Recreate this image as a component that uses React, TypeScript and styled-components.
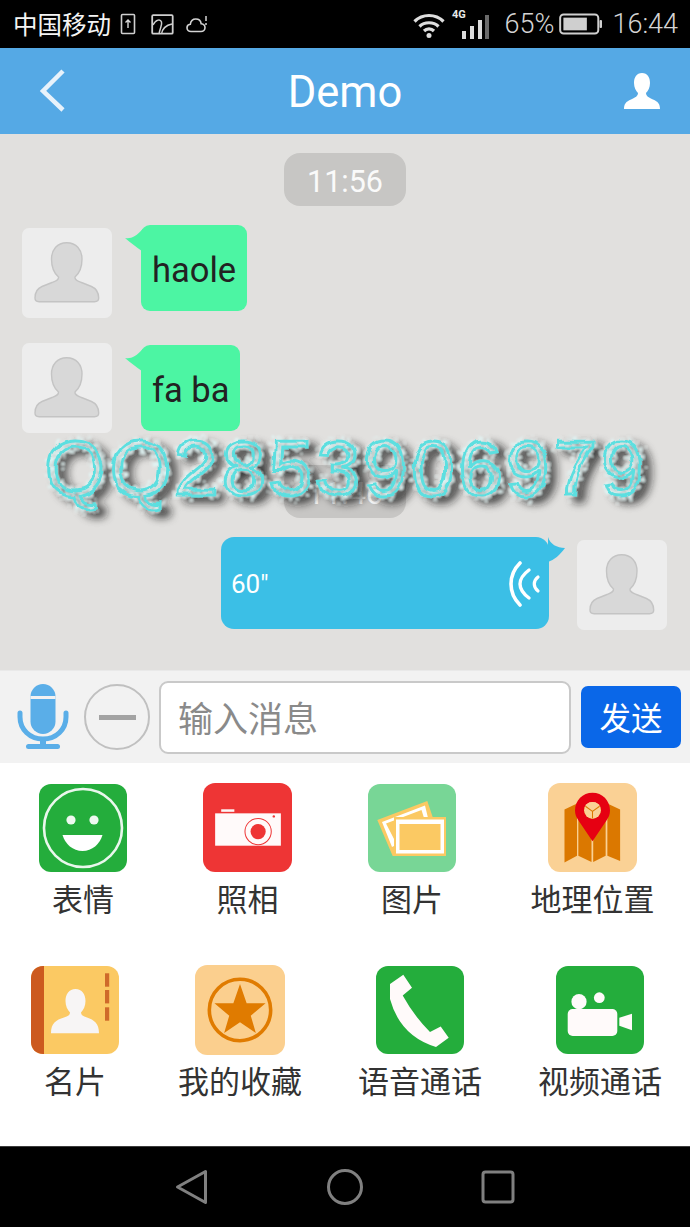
import React from "react";
import styled, { createGlobalStyle } from "styled-components";

const Global = createGlobalStyle`
  html, body { margin: 0; padding: 0; background: #000; }
  * { box-sizing: border-box; }
`;

const Screen = styled.div`
  position: relative;
  width: 690px;
  height: 1227px;
  display: flex;
  flex-direction: column;
  overflow: hidden;
  font-family: Roboto, "Noto Sans CJK SC", sans-serif;
`;

const StatusBar = styled.div`
  height: 48px;
  background: #000;
  display: flex;
  align-items: center;
  justify-content: space-between;
  padding: 0 12px 0 13px;
`;
const StatusGroup = styled.div`
  display: flex;
  align-items: center;
`;
const Carrier = styled.span`
  font: 400 24.5px/48px "Noto Sans CJK SC", sans-serif;
  color: #f4f4f4;
  margin-right: 9px;
`;
const StatusText = styled.span`
  font: 300 27px/50px Roboto, sans-serif;
  color: #d4d4d4;
`;
const StatusSvg = styled.svg<{ $ml?: number; $mr?: number }>`
  display: block;
  flex: none;
  margin-left: ${(p) => p.$ml ?? 0}px;
  margin-right: ${(p) => p.$mr ?? 0}px;
`;

const Header = styled.div`
  height: 86px;
  background: #55a9e5;
  display: flex;
  align-items: center;
  justify-content: space-between;
  padding: 0 29px 0 38px;
  position: relative;
`;
const Title = styled.div`
  position: absolute;
  left: 0;
  right: 0;
  top: 0;
  text-align: center;
  font: 400 43.5px/90px Roboto, sans-serif;
  color: #fff;
`;

const Chat = styled.div`
  height: 536px;
  background: #e1e0de;
  padding-top: 19px;
  display: flex;
  flex-direction: column;
`;
const TimePill = styled.div<{ $mt?: number; $mb: number }>`
  width: 122px;
  height: 53px;
  align-self: center;
  flex: none;
  border-radius: 16px;
  background: #c7c6c4;
  color: #fafafa;
  font: 400 30.5px/57px Roboto, sans-serif;
  text-align: center;
  margin-top: ${(p) => p.$mt ?? 0}px;
  margin-bottom: ${(p) => p.$mb}px;
`;
const Row = styled.div<{ $mine?: boolean; $mb?: number }>`
  display: flex;
  align-items: flex-start;
  justify-content: ${(p) => (p.$mine ? "flex-end" : "flex-start")};
  padding: ${(p) => (p.$mine ? "0 23px 0 0" : "0 0 0 22px")};
  gap: ${(p) => (p.$mine ? 28 : 29)}px;
  margin-bottom: ${(p) => p.$mb ?? 0}px;
`;
const Avatar = styled.div<{ $mt: number }>`
  width: 90px;
  height: 90px;
  flex: none;
  background: #ededed;
  border-radius: 7px;
  margin-top: ${(p) => p.$mt}px;
`;
const GreenBubble = styled.div<{ $mt?: number }>`
  position: relative;
  height: 86px;
  padding: 0 11px;
  background: #4cf5a3;
  border-radius: 9px;
  color: #222;
  font: 400 34.5px/90px Roboto, sans-serif;
  margin-top: ${(p) => p.$mt ?? 0}px;
`;
const BlueBubble = styled.div`
  position: relative;
  width: 328px;
  height: 92px;
  background: #3bbfe6;
  border-radius: 13px;
  display: flex;
  align-items: center;
  justify-content: space-between;
  padding: 2px 7px 0 10px;
  color: #fff;
  font: 400 26px/1 Roboto, sans-serif;
`;
const Tail = styled.svg<{ $side: "left" | "right" }>`
  position: absolute;
  top: 0;
  ${(p) => (p.$side === "left" ? "left: -16px;" : "right: -17px;")}
`;

const InputBar = styled.div`
  height: 93px;
  background: #f2f2f2;
  border-top: 1px solid #e9e9e9;
  display: flex;
  align-items: center;
  padding: 0 9px 0 17px;
`;
const Minus = styled.div`
  width: 66px;
  height: 66px;
  margin-left: 15px;
  flex: none;
  border-radius: 50%;
  border: 2px solid #c0c0c0;
  display: flex;
  align-items: center;
  justify-content: center;
  &::before {
    content: "";
    width: 37px;
    height: 5px;
    background: #a3a3a3;
  }
`;
const Field = styled.div`
  width: 412px;
  height: 73px;
  margin-left: 9px;
  flex: none;
  background: #fff;
  border: 2px solid #c9c9c9;
  border-radius: 9px;
  padding-left: 17px;
  color: #8a8a8a;
  font: 400 35px/67px "Noto Sans CJK SC", sans-serif;
`;
const Send = styled.div`
  width: 100px;
  height: 62px;
  margin-left: 10px;
  flex: none;
  background: #0a67e8;
  border-radius: 7px;
  color: #fff;
  text-align: center;
  font: 400 31.5px/60px "Noto Sans CJK SC", sans-serif;
`;

const Panel = styled.div`
  height: 383px;
  background: #fff;
  padding-top: 20px;
`;
const PanelRow = styled.div<{ $cols: string }>`
  display: grid;
  grid-template-columns: ${(p) => p.$cols};
  height: 182px;
`;
const Item = styled.div`
  display: flex;
  flex-direction: column;
  align-items: center;
`;
const Slot = styled.div`
  height: 90px;
  display: flex;
  align-items: flex-start;
`;
const TileSvg = styled.svg<{ $mt?: number }>`
  display: block;
  margin-top: ${(p) => p.$mt ?? 0}px;
`;
const Label = styled.div`
  font: 400 31px/50px "Noto Sans CJK SC", sans-serif;
  color: #333;
  white-space: nowrap;
`;

const NavBar = styled.div`
  height: 81px;
  background: #000;
  border-top: 1px solid #3c3c3c;
  display: flex;
  align-items: center;
  justify-content: center;
  gap: 118px;
  padding: 0 1px 1px 0;
`;

const Watermark = styled.div`
  position: absolute;
  left: 45px;
  top: 423px;
  font: 400 78px/90px "Liberation Sans", sans-serif;
  letter-spacing: 4px;
  white-space: nowrap;
  color: rgba(120, 235, 235, 0.05);
  -webkit-text-stroke: 3px #5cdfe0;
  filter: url(#fuzz);
  pointer-events: none;
`;
const Defs = styled.svg`
  position: absolute;
  width: 0;
  height: 0;
`;

const PersonPath =
  "M44.7 14.7C35 14.7 29.5 22 29.5 31C29.5 40 33 46 36.5 49C37 52 34 53 30 54.5L20 58.5C15 60.5 13 65 13 70C13 72.5 14.5 73.7 17 73.7H72.5C75 73.7 76.7 72.5 76.7 70C76.7 65 74 60.5 69.5 58.5L59.5 54.5C55.5 53 52.5 52 53 49C56.5 46 60 40 60 31C60 22 54.5 14.7 44.7 14.7Z";

const Person = ({ mt }: { mt: number }) => (
  <Avatar $mt={mt}>
    <svg width="90" height="90" viewBox="0 0 90 90">
      <path d={PersonPath} fill="#d8d8d8" stroke="#c4c4c4" strokeWidth="1.4" />
    </svg>
  </Avatar>
);

const GreenTail = () => (
  <Tail $side="left" width="18" height="30" viewBox="0 0 18 30">
    <path d="M0 13C6 14 12 12 20 1V28C12 23 6 18 0 13Z" fill="#4cf5a3" />
  </Tail>
);

const Tile = ({ size = 88, mt, bg, children }: { size?: number; mt?: number; bg: string; children: React.ReactNode }) => (
  <TileSvg $mt={mt} width={size} height={size} viewBox="0 0 88 88">
    <rect width="88" height="88" rx="12" fill={bg} />
    {children}
  </TileSvg>
);

const items1 = [
  {
    label: "表情",
    icon: (
      <Tile mt={1} bg="#24ad3c">
        <circle cx="44" cy="44" r="39" fill="none" stroke="#e9f7ec" strokeWidth="2.6" />
        <circle cx="32" cy="36" r="4.6" fill="#eef9f0" />
        <circle cx="55" cy="36" r="4.6" fill="#eef9f0" />
        <path d="M23.5 51H63.5C61 60 53 67 43.5 67C34 67 26 60 23.5 51Z" fill="#fff" />
      </Tile>
    ),
  },
  {
    label: "照相",
    icon: (
      <Tile mt={0} size={89} bg="#ee3535">
        <rect x="18" y="26" width="13" height="2.5" fill="#fdf5f5" />
        <rect x="12" y="30" width="65" height="32" fill="#fffafa" />
        <circle cx="54.5" cy="48" r="13" fill="#fffafa" stroke="#ee3535" strokeWidth="1" />
        <circle cx="54.5" cy="48" r="7.5" fill="#ee3535" />
        <circle cx="70" cy="33" r="1.2" fill="#ee3535" />
      </Tile>
    ),
  },
  {
    label: "图片",
    icon: (
      <Tile mt={1} bg="#78d696">
        <path d="M9.3 36L59.3 17L65 34H26V72H24.7Z" fill="#fbc963" />
        <path d="M14 38L57 21.5L60 34H26V62L24 63Z" fill="#fff" />
        <path d="M18 39.5L53.5 26L56 34H26V55Z" fill="#fbc963" />
        <rect x="26" y="33" width="52" height="39" fill="#fbc963" />
        <rect x="28" y="35.5" width="48" height="34" fill="#fff" />
        <rect x="31.5" y="40" width="41" height="26" fill="#fbc963" />
      </Tile>
    ),
  },
  {
    label: "地理位置",
    icon: (
      <Tile mt={0} size={89} bg="#fad195">
        <g fill="#db7800">
          <path d="M16.3 26.3L28.7 20.3V72L16.3 78.5Z" />
          <path d="M30 20.3L43 28.7V78L30 72Z" />
          <path d="M44.7 28.7L57 20.3V72L44.7 78Z" />
          <path d="M58.7 20.3L71.3 26.3V77L58.7 72Z" />
        </g>
        <path
          fillRule="evenodd"
          d="M44 9.7C34.4 9.7 26.7 17.4 26.7 27C26.7 31.5 28 34 30.5 37.5L44 57.7L57.5 37.5C60 34 61.3 31.5 61.3 27C61.3 17.4 53.6 9.7 44 9.7ZM44 18.7A8.3 8.3 0 1 1 44 35.3A8.3 8.3 0 1 1 44 18.7Z"
          fill="#e60012"
        />
        <circle cx="44" cy="27" r="8.3" fill="#fad195" />
        <path d="M37 23L44 28L51 23M44 28V35" stroke="#db7800" strokeWidth="1" fill="none" />
      </Tile>
    ),
  },
];

const items2 = [
  {
    label: "名片",
    icon: (
      <Tile mt={1} bg="#fbc963">
        <path d="M13 0H12C5 0 0 5 0 12V76C0 83 5 88 12 88H13Z" fill="#cc5a1f" />
        <g fill="#cf6a2a">
          <rect x="74" y="7.3" width="4.2" height="13.4" />
          <rect x="74" y="24" width="4.2" height="13.4" />
          <rect x="74" y="41.3" width="4.2" height="13.4" />
        </g>
        <path
          d="M44.5 23C38 23 34.5 28 34.5 35C34.5 40 36.5 44 39 46.5C39 49 37 50 33 51.5C25 54 20 57 20 67.3H68C68 57 63 54 56 51.5C52 50 50 49 50 46.5C52.5 44 54.5 40 54.5 35C54.5 28 51 23 44.5 23Z"
          fill="#f7f5f5"
        />
      </Tile>
    ),
  },
  {
    label: "我的收藏",
    icon: (
      <Tile size={90} bg="#fbcf8e">
        <circle cx="44" cy="44" r="30" fill="none" stroke="#e07b00" strokeWidth="3.5" />
        <path d="M44 18.5L50.5 37.5H69L54.5 49.5L59.5 66.5L44 56L28.5 66.5L33.5 49.5L19 37.5H37.5Z" fill="#e07b00" />
      </Tile>
    ),
  },
  {
    label: "语音通话",
    icon: (
      <Tile mt={1} bg="#24ad3c">
        <path
          d="M14 18L27.3 8.8L36 21.8L26.7 29.5Q38 50 54 66L64.7 60.5L72.7 71.8L60 81Q24 70 14 33Z"
          fill="#fffafa"
        />
      </Tile>
    ),
  },
  {
    label: "视频通话",
    icon: (
      <Tile mt={1} bg="#24ad3c">
        <circle cx="23" cy="35.7" r="7.6" fill="#fffafa" />
        <circle cx="43.3" cy="31.7" r="5.4" fill="#fffafa" />
        <rect x="11.7" y="43" width="49.6" height="27" rx="5" fill="#fffafa" />
        <path d="M63.3 51.7L76 47.7V64.3L63.3 59.7Z" fill="#fffafa" />
      </Tile>
    ),
  },
];

export default function App() {
  return (
    <>
      <Global />
      <Screen>
        <StatusBar>
          <StatusGroup>
            <Carrier>中国移动</Carrier>
            <StatusSvg width="16" height="22" viewBox="0 0 16 22" $mr={15}>
              <rect x="1.5" y="1.5" width="13" height="19" rx="1" fill="none" stroke="#cfcfcf" strokeWidth="1.6" />
              <path d="M8 15V7M5.5 9.5L8 7L10.5 9.5" fill="none" stroke="#dcdcdc" strokeWidth="1.4" />
            </StatusSvg>
            <StatusSvg width="23" height="21" viewBox="0 0 23 21" $mr={12}>
              <rect x="1.2" y="1.2" width="20.5" height="18.5" rx="1" fill="none" stroke="#cfcfcf" strokeWidth="1.8" />
              <path d="M2 11C5 5 9.5 5 10.5 8C11.5 11 9 14 8 20M21 10C15.5 11 11.5 14 10.5 20" fill="none" stroke="#cfcfcf" strokeWidth="1.5" />
            </StatusSvg>
            <StatusSvg width="22" height="18" viewBox="0 0 22 18">
              <path d="M5 16.5C2.5 16.5 1 14.7 1 12.8C1 11 2.5 9.5 4.3 9.3C4.8 6 7 4 9.8 4C12.7 4 14.8 6 15.2 8.8C17.2 9 19 10.5 19 12.7C19 14.8 17.3 16.5 15 16.5Z" fill="none" stroke="#d4d4d4" strokeWidth="1.6" />
              <path d="M20 1V6M20 8V10" stroke="#d4d4d4" strokeWidth="1.5" />
            </StatusSvg>
          </StatusGroup>
          <StatusGroup>
            <StatusSvg width="76" height="32" viewBox="0 0 76 32" $mr={16}>
              <g fill="none" stroke="#dedede" strokeWidth="3.2">
                <path d="M1.5 13.5C9.5 5.5 22.5 5.5 30.5 13.5" />
                <path d="M6.5 18.5C11.5 13.5 20.5 13.5 25.5 18.5" />
                <path d="M11 23C13.8 20.2 18.2 20.2 21 23" />
              </g>
              <circle cx="16" cy="27.5" r="2.5" fill="#dedede" />
              <text x="39" y="10" fontFamily="Roboto, sans-serif" fontSize="11" fontWeight="700" fill="#e8e8e8">4G</text>
              <rect x="49" y="23" width="4" height="8" fill="#dcdcdc" />
              <rect x="57" y="18" width="4" height="13" fill="#dcdcdc" />
              <rect x="65" y="12" width="4" height="19" fill="#dcdcdc" />
              <rect x="72" y="7" width="4" height="24" fill="#6a6a6a" />
            </StatusSvg>
            <StatusText>65%</StatusText>
            <StatusSvg width="43" height="22" viewBox="0 0 44 22" $ml={5} $mr={10}>
              <rect x="1.2" y="1.2" width="39" height="19.6" rx="3.5" fill="none" stroke="#cfcfcf" strokeWidth="2" />
              <rect x="4.5" y="4.5" width="24" height="13" fill="#cfcfcf" />
              <rect x="41.5" y="7" width="2.5" height="8" rx="1" fill="#cfcfcf" />
            </StatusSvg>
            <StatusText>16:44</StatusText>
          </StatusGroup>
        </StatusBar>

        <Header>
          <Title>Demo</Title>
          <StatusSvg width="28" height="46" viewBox="0 0 28 46">
            <path d="M25 3L5 23L25 42" fill="none" stroke="#e7f2fb" strokeWidth="4.5" />
          </StatusSvg>
          <StatusSvg width="38" height="38" viewBox="0 0 38 38">
            <path
              d="M19 1C13.5 1 11 5.5 11 11C11 15.5 13 19 15 21C15 24 12.5 25.5 8 27.5C3 29.5 1 32 1 37H37C37 32 35 29.5 30 27.5C25.5 25.5 23 24 23 21C25 19 27 15.5 27 11C27 5.5 24.5 1 19 1Z"
              fill="#fff"
            />
          </StatusSvg>
        </Header>

        <Chat>
          <TimePill $mb={19}>11:56</TimePill>
          <Row $mb={25}>
            <Person mt={3} />
            <GreenBubble>
              <GreenTail />
              haole
            </GreenBubble>
          </Row>
          <Row>
            <Person mt={0} />
            <GreenBubble $mt={2}>
              <GreenTail />
              fa ba
            </GreenBubble>
          </Row>
          <TimePill $mt={32} $mb={19}>11:46</TimePill>
          <Row $mine>
            <BlueBubble>
              <Tail $side="right" width="18" height="26" viewBox="0 0 18 26">
                <path d="M0 0C2 7 9 11 17 11C12 18 6 23 0 25Z" fill="#3bbfe6" />
              </Tail>
              <span>60"</span>
              <svg width="34" height="46" viewBox="0 0 34 46">
                <g fill="none" stroke="#fff" strokeLinecap="round">
                  <path d="M12 2C0 14 0 32 12 44" strokeWidth="3.6" />
                  <path d="M21 9C9 18 9 28 21 37" strokeWidth="3.4" />
                  <path d="M30 16C25 20 25 26 30 30" strokeWidth="3.2" />
                </g>
              </svg>
            </BlueBubble>
            <Person mt={3} />
          </Row>
        </Chat>

        <InputBar>
          <svg width="52" height="66" viewBox="0 0 52 66" style={{ flex: "none" }}>
            <rect x="13.5" y="0" width="25" height="50" rx="12.5" fill="#5aaee8" />
            <rect x="13.5" y="12" width="25" height="3" fill="#f2f2f2" />
            <path d="M3 29V33C3 45.5 13 55 26 55C39 55 49 45.5 49 33V29" fill="none" stroke="#5aaee8" strokeWidth="5" strokeLinecap="round" />
            <rect x="23" y="54" width="6" height="8" fill="#5aaee8" />
            <rect x="9" y="60" width="34" height="5" rx="2.5" fill="#5aaee8" />
          </svg>
          <Minus />
          <Field>输入消息</Field>
          <Send>发送</Send>
        </InputBar>

        <Panel>
          <PanelRow $cols="166px 163px 166px 195px">
            {items1.map((it) => (
              <Item key={it.label}>
                <Slot>{it.icon}</Slot>
                <Label>{it.label}</Label>
              </Item>
            ))}
          </PanelRow>
          <PanelRow $cols="150px 180px 180px 180px">
            {items2.map((it) => (
              <Item key={it.label}>
                <Slot>{it.icon}</Slot>
                <Label>{it.label}</Label>
              </Item>
            ))}
          </PanelRow>
        </Panel>

        <NavBar>
          <svg width="34" height="36" viewBox="0 0 34 36">
            <path d="M2.5 18L30.5 2.5V33.5Z" fill="none" stroke="#808080" strokeWidth="3" strokeLinejoin="round" />
          </svg>
          <svg width="36" height="36" viewBox="0 0 36 36">
            <circle cx="18" cy="18" r="16.5" fill="none" stroke="#808080" strokeWidth="3" />
          </svg>
          <svg width="34" height="34" viewBox="0 0 34 34">
            <rect x="2" y="2" width="30" height="30" rx="2.5" fill="none" stroke="#808080" strokeWidth="3" />
          </svg>
        </NavBar>

        <Defs>
          <defs>
            <filter id="fuzz" x="-5%" y="-20%" width="110%" height="140%">
              <feTurbulence type="fractalNoise" baseFrequency="0.18" numOctaves="4" seed="4" result="noise" />
              <feTurbulence type="fractalNoise" baseFrequency="0.06" numOctaves="2" seed="9" result="slow" />
              <feDisplacementMap in="SourceAlpha" in2="noise" scale="20" xChannelSelector="R" yChannelSelector="G" result="wide" />
              <feGaussianBlur in="wide" stdDeviation="0.8" result="wideSoft" />
              <feFlood floodColor="#e2f7f7" floodOpacity="0.95" />
              <feComposite in2="wideSoft" operator="in" result="halo" />
              <feDisplacementMap in="SourceGraphic" in2="slow" scale="7" xChannelSelector="G" yChannelSelector="R" />
              <feGaussianBlur stdDeviation="0.6" result="core" />
              <feGaussianBlur in="SourceAlpha" stdDeviation="5" />
              <feOffset dx="8" dy="5" />
              <feComponentTransfer result="shadow">
                <feFuncA type="linear" slope="1.7" />
              </feComponentTransfer>
              <feFlood floodColor="#1a1a1a" floodOpacity="0.85" />
              <feComposite in2="shadow" operator="in" result="darkShadow" />
              <feMerge>
                <feMergeNode in="darkShadow" />
                <feMergeNode in="halo" />
                <feMergeNode in="core" />
              </feMerge>
            </filter>
          </defs>
        </Defs>
        <Watermark>QQ2853906979</Watermark>
      </Screen>
    </>
  );
}
